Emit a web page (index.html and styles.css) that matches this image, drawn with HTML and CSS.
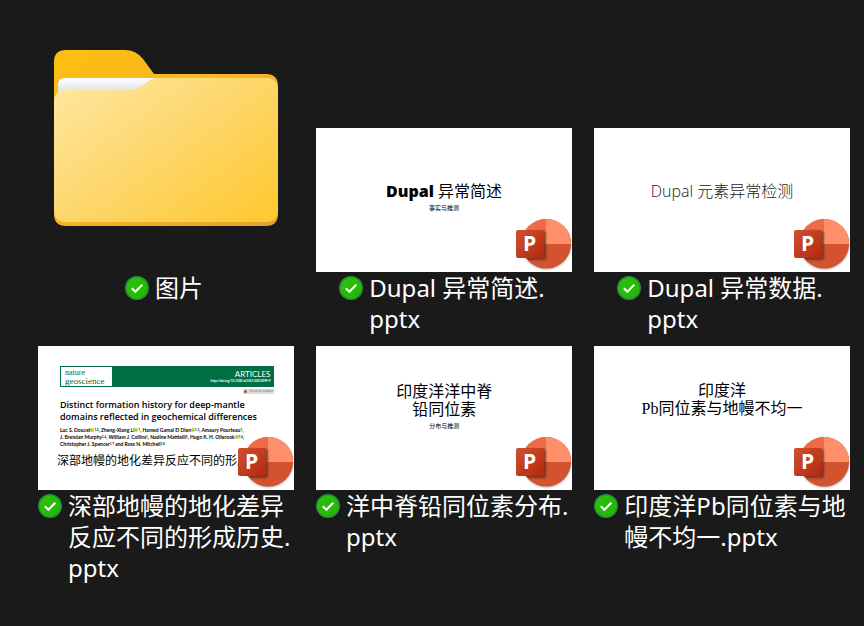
FILE: index.html
```
<!DOCTYPE html>
<html lang="zh-CN">
<head>
<meta charset="utf-8">
<meta name="viewport" content="width=device-width, initial-scale=1">
<title>图片</title>
<link rel="stylesheet" href="styles.css">
</head>
<body>
<svg class="defs" aria-hidden="true">
  <defs>
    <linearGradient id="ppt-box" x1="0" y1="0" x2="1" y2="1">
      <stop offset="0" stop-color="#d0502f"/>
      <stop offset="1" stop-color="#b2290d"/>
    </linearGradient>
    <filter id="soft" x="-20%" y="-20%" width="150%" height="150%">
      <feGaussianBlur stdDeviation="1.2"/>
    </filter>
    <clipPath id="ppt-disc"><circle cx="30.3" cy="25.8" r="24.8"/></clipPath>
    <symbol id="ppt" viewBox="0 0 56 54">
      <circle cx="30.3" cy="26.6" r="24.8" fill="#000" opacity=".3" filter="url(#soft)"/>
      <g clip-path="url(#ppt-disc)">
        <rect width="56" height="54" fill="#d35230"/>
        <rect width="30" height="26" fill="#ed6c47"/>
        <rect x="30" width="26" height="26" fill="#ff8f6b"/>
        <rect x="2" y="13" width="28" height="29" rx="2" fill="#000" opacity=".4" filter="url(#soft)"/>
      </g>
      <rect x="0" y="12" width="28" height="28" rx="2" fill="url(#ppt-box)"/>
      <text class="ppt-letter" x="7" y="33">P</text>
    </symbol>
    <linearGradient id="badge-fill" x1="0" y1="0" x2="1" y2="1">
      <stop offset="0" stop-color="#2fc010"/>
      <stop offset="1" stop-color="#1fb800"/>
    </linearGradient>
    <symbol id="synced" viewBox="0 0 24 24">
      <circle cx="12" cy="12" r="12" fill="#27913a"/>
      <circle cx="12" cy="12" r="10.4" fill="url(#badge-fill)"/>
      <path d="M6.8 12.2l3.6 3.6 6.9-7" fill="none" stroke="#fff" stroke-width="2"/>
    </symbol>
    <linearGradient id="folder-back" x1="0" y1="0" x2="1" y2="1">
      <stop offset="0" stop-color="#fdc010"/>
      <stop offset=".5" stop-color="#f5b424"/>
      <stop offset="1" stop-color="#dfa42c"/>
    </linearGradient>
    <linearGradient id="folder-front" x1="0" y1="0" x2="1" y2=".9">
      <stop offset="0" stop-color="#ffe8a2"/>
      <stop offset=".5" stop-color="#fdd76d"/>
      <stop offset="1" stop-color="#ffc933"/>
    </linearGradient>
    <linearGradient id="folder-paper" x1="0" y1="0" x2="0" y2="1">
      <stop offset="0" stop-color="#ffffff"/>
      <stop offset="1" stop-color="#d9dde4"/>
    </linearGradient>
  </defs>
</svg>

<main class="grid">
  <article class="item">
    <svg class="folder" viewBox="0 0 256 256" role="img" aria-label="文件夹">
      <path d="M16 46Q16 34 28 34H87Q98 34 105 43L116 58H228Q240 58 240 70V198Q240 210 228 210H28Q16 210 16 198Z" fill="url(#folder-back)"/>
      <path d="M20 69Q20 62 27 62H120L100 78H20Z" fill="url(#folder-paper)"/>
      <path d="M16 86Q16 74 28 74H92Q99 74 105 69L109 66Q114 62 120 62H228Q240 62 240 74V194Q240 206 228 206H28Q16 206 16 194Z" fill="url(#folder-front)"/>
    </svg>
    <div class="label">
      <svg class="badge" aria-hidden="true"><use href="#synced"/></svg>
      <span class="name">图片</span>
    </div>
  </article>

  <article class="item">
    <div class="slide">
      <div class="heading"><p class="title"><span class="heavy">Dupal</span> 异常简述</p></div>
      <p class="subtitle">事实与推测</p>
      <svg class="app" aria-hidden="true"><use href="#ppt"/></svg>
    </div>
    <div class="label">
      <svg class="badge" aria-hidden="true"><use href="#synced"/></svg>
      <span class="name">Dupal 异常简述.<br>pptx</span>
    </div>
  </article>

  <article class="item">
    <div class="slide">
      <div class="heading"><p class="title light">Dupal 元素异常检测</p></div>
      <svg class="app" aria-hidden="true"><use href="#ppt"/></svg>
    </div>
    <div class="label">
      <svg class="badge" aria-hidden="true"><use href="#synced"/></svg>
      <span class="name">Dupal 异常数据.<br>pptx</span>
    </div>
  </article>

  <article class="item">
    <div class="slide paper">
      <header class="masthead">
        <div class="journal"><span>nature</span><span class="journal-sub">geoscience</span></div>
        <div class="section">
          <span>ARTICLES</span>
          <span class="doi">https://doi.org/10.1038/s41561-020-0599-9</span>
        </div>
      </header>
      <p class="updates"><span class="mark"></span>Check for updates</p>
      <p class="headline">Distinct formation history for deep-mantle<br>domains reflected in geochemical differences</p>
      <p class="authors">Luc S. Doucet<i class="orcid"></i><sup>1,2</sup>, Zheng-Xiang Li<i class="orcid"></i><sup>1</sup>, Hamed Gamal El Dien<i class="orcid"></i><sup>1,3</sup>, Amaury Pourteau<sup>1</sup>,<br>J. Brendan Murphy<sup>1,4</sup>, William J. Collins<sup>1</sup>, Nadine Mattielli<sup>5</sup>, Hugo K. H. Olierook<i class="orcid"></i><sup>1,6</sup>,<br>Christopher J. Spencer<sup>1,7</sup> and Ross N. Mitchell<sup>1,8</sup></p>
      <p class="caption">深部地幔的地化差异反应不同的形成</p>
      <svg class="app" aria-hidden="true"><use href="#ppt"/></svg>
    </div>
    <div class="label">
      <svg class="badge" aria-hidden="true"><use href="#synced"/></svg>
      <span class="name">深部地幔的地化差异<br>反应不同的形成历史.<br>pptx</span>
    </div>
  </article>

  <article class="item">
    <div class="slide">
      <div class="heading"><p class="title">印度洋洋中脊<br>铅同位素</p></div>
      <p class="subtitle">分布与推测</p>
      <svg class="app" aria-hidden="true"><use href="#ppt"/></svg>
    </div>
    <div class="label">
      <svg class="badge" aria-hidden="true"><use href="#synced"/></svg>
      <span class="name">洋中脊铅同位素分布.<br>pptx</span>
    </div>
  </article>

  <article class="item">
    <div class="slide">
      <div class="heading"><p class="title serif">印度洋<br>Pb同位素与地幔不均一</p></div>
      <svg class="app" aria-hidden="true"><use href="#ppt"/></svg>
    </div>
    <div class="label">
      <svg class="badge" aria-hidden="true"><use href="#synced"/></svg>
      <span class="name">印度洋Pb同位素与地<br>幔不均一.pptx</span>
    </div>
  </article>
</main>
</body>
</html>
```
FILE: styles.css
```
* { box-sizing: border-box; }

body {
  margin: 0;
  min-height: 100vh;
  background: #1a1a1a;
  color: #fff;
  font-family: "Noto Sans", "Noto Sans CJK SC", sans-serif;
}

p { margin: 0; }

.defs {
  position: absolute;
  width: 0;
  height: 0;
}

.grid {
  display: grid;
  grid-template-columns: repeat(auto-fill, 256px);
  column-gap: 22px;
  padding: 16px 14px 16px 38px;
}

/* Thumbnails share a baseline across a row, names hang below it. */
.item {
  display: grid;
  grid-row: span 2;
  grid-template-rows: subgrid;
  margin-bottom: 12px;
}

.folder {
  display: block;
  width: 100%;
  aspect-ratio: 1;
}

.label {
  display: flex;
  justify-content: center;
  gap: 6px;
  padding-right: 4px;
}

.badge {
  flex: none;
  width: 24px;
  height: 24px;
  margin-top: 4px;
}

.name {
  font-size: 24px;
  line-height: 31px;
  white-space: nowrap;
}

.slide {
  position: relative;
  align-self: end;
  display: flex;
  flex-direction: column;
  align-items: center;
  aspect-ratio: 16 / 9;
  overflow: hidden;
  background: #fff;
  color: #000;
}

.app {
  position: absolute;
  right: 0;
  bottom: 0;
  width: 56px;
  height: 54px;
}

.ppt-letter {
  fill: #fff;
  font: 700 21px "Open Sans", sans-serif;
}

.heading {
  display: flex;
  flex: 0 0 72px;
  align-items: flex-end;
}

.title {
  font-size: 16px;
  line-height: 18px;
  text-align: center;
}

.subtitle {
  margin-top: 4px;
  font-size: 6px;
  line-height: 8px;
}

.light {
  color: #222;
  font-family: "Open Sans", "Noto Sans CJK SC", sans-serif;
  font-weight: 300;
}

.heavy {
  font-family: "Noto Sans", sans-serif;
  font-weight: 900;
}

.serif { font-family: "Liberation Serif", "Noto Sans CJK SC", serif; }

.paper {
  align-items: stretch;
  padding: 20px 20px 0 22px;
  font-family: Lato, "Noto Sans CJK SC", sans-serif;
}

.masthead {
  display: flex;
  height: 21px;
  border: 1px solid #007044;
  background: #007044;
}

.journal {
  display: flex;
  flex-direction: column;
  width: 51px;
  padding: 2px 0 0 4px;
  background: #fff;
  color: #006b4a;
  font: 8px/8px "Liberation Serif", serif;
}

.journal-sub {
  font-size: 9px;
  line-height: 8px;
}

.section {
  display: flex;
  flex: 1;
  flex-direction: column;
  align-items: flex-end;
  padding: 3px 3px 0 0;
  color: #fff;
  font-size: 8px;
  line-height: 9px;
}

.doi {
  font-size: 3px;
  font-weight: 700;
  line-height: 5px;
}

.updates {
  display: flex;
  align-items: center;
  align-self: flex-end;
  gap: 2px;
  height: 5px;
  margin-top: 2px;
  padding: 0 1px;
  background: #ddd;
  color: #777;
  font-size: 3px;
  line-height: 5px;
}

.mark {
  width: 3px;
  height: 3px;
  border-radius: 50%;
  background: #a0522d;
}

.headline {
  margin-top: 5px;
  font-family: "Open Sans", sans-serif;
  font-size: 9px;
  font-weight: 600;
  line-height: 12px;
  white-space: nowrap;
}

.authors {
  margin-top: 4px;
  font-size: 5px;
  font-weight: 700;
  line-height: 7px;
  white-space: nowrap;
}

.authors sup {
  font-size: 3px;
  line-height: 0;
  vertical-align: 1px;
}

.orcid {
  display: inline-block;
  width: 4px;
  height: 4px;
  border-radius: 50%;
  background: #b4d23c;
}

.caption {
  margin: 5px 0 0 -3px;
  font-size: 12px;
  line-height: 16px;
  white-space: nowrap;
}
```
